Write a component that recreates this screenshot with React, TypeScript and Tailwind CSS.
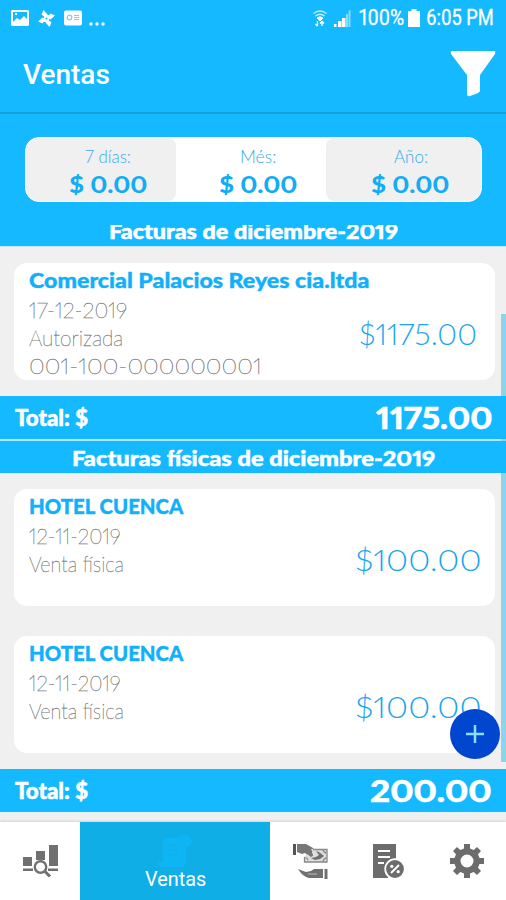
import { useLayoutEffect, useRef, useState } from "react";

type FitProps = { text: string; width: number; className?: string };

// One line of text condensed or widened to an exact width.
function Fit({ text, width, className = "" }: FitProps) {
  const ref = useRef<HTMLSpanElement>(null);
  const [scale, setScale] = useState(1);
  useLayoutEffect(() => {
    if (ref.current) setScale(width / ref.current.offsetWidth);
  }, [text, width]);
  return (
    <div className={`shrink-0 whitespace-nowrap ${className}`} style={{ width }}>
      <span ref={ref} className="inline-block origin-left" style={{ transform: `scaleX(${scale})` }}>
        {text}
      </span>
    </div>
  );
}

function Summary({ label, labelWidth, shade }: { label: string; labelWidth: number; shade: string }) {
  return (
    <div className={`flex shrink-0 flex-col items-center pl-3.5 pt-[5px] ${shade}`}>
      <Fit text={label} width={labelWidth} className="h-[26px] text-[18px] font-light leading-[26px] text-[#3aa9e8]" />
      <Fit text="$ 0.00" width={79} className="h-[30px] text-[22px] font-black leading-[32px] text-[#12adf3]" />
    </div>
  );
}

type Line = { text: string; width: number };

function InvoiceCard({ title, lines, amount }: { title: Line; lines: Line[]; amount: Line & { pad: string } }) {
  return (
    <div className={`ml-3.5 flex h-[117px] w-[481px] shrink-0 justify-between rounded-[13px] bg-white pl-[15px] pt-px ${amount.pad}`}>
      <div className="w-0">
        <Fit {...title} className="h-8 text-[21px] font-black leading-8 text-[#12b0fa] [-webkit-text-stroke:0.4px_#12b0fa]" />
        {lines.map((l) => (
          <Fit key={l.text} {...l} className="h-7 text-[21.500px] font-thin leading-7 text-[#777] [-webkit-text-stroke:0.35px_#777]" />
        ))}
      </div>
      <Fit text={amount.text} width={amount.width} className="mt-[50px] h-10 text-[29.500px] font-light leading-10 text-[#1ba5ee]" />
    </div>
  );
}

function TotalBar({ amount, width }: { amount: string; width: number }) {
  return (
    <div className="relative z-10 flex h-[43px] shrink-0 items-center justify-between bg-[#14b9ff] pl-[15px] pr-3.5 text-white [-webkit-text-stroke:0.5px_white]">
      <Fit text="Total: $" width={73} className="text-[22px] font-black leading-[43px]" />
      <Fit text={amount} width={width} className="text-[29.500px] font-black leading-[43px]" />
    </div>
  );
}

function StatusBar() {
  return (
    <div className="flex h-9 justify-between pl-[11px] pr-3 text-white">
      <div className="flex items-center gap-[9px]">
        <svg className="h-4 w-[18px]" viewBox="0 0 18 16">
          <path fill="#fff" fillRule="evenodd" d="M1 0h16l1 1v14l-1 1H1l-1-1V1zM2 2v10l4-4 3 2 4-4 3 3V2zM4 3h2v2H4z" />
        </svg>
        <svg className="h-[17px] w-[17px]" viewBox="0 0 17 17" fill="#fff">
          <path d="M8 8 9.500 4.500 5.500 0 3.500 4.500zM9 8l3.500 1.500L17 5.500l-4.500-2zM9 9l-1.500 3.500L11.500 17l2-4.500zM8 9 4.500 7.500 0 11.500l4.500 2z" />
          <path d="M6 5h5v7H6z" />
          <circle cx="8.500" cy="8.500" r="1" fill="#14b9ff" />
        </svg>
        <svg className="h-4 w-[18px]" viewBox="0 0 18 16">
          <rect width="18" height="15" y=".5" rx="2" fill="#fff" />
          <circle cx="5.500" cy="7.500" r="2.300" fill="none" stroke="#79cff5" strokeWidth="1.300" />
          <path d="M10 5.500h5M10 7.500h5M10 9.500h5" stroke="#79cff5" strokeWidth="1.200" />
        </svg>
        <svg className="ml-[-2px] mt-[11px] h-1 w-4" viewBox="0 0 16 4" fill="#fff">
          <circle cx="2" cy="2" r="1.700" />
          <circle cx="8" cy="2" r="1.700" />
          <circle cx="14" cy="2" r="1.700" />
        </svg>
      </div>
      <div className="flex items-center font-[Roboto,sans-serif] text-[21.500px] leading-9">
        <svg className="mr-1.5 h-[17px] w-3.5" viewBox="0 0 14 17" fill="none" stroke="#fff">
          <path d="M.5 3.500Q7-1.500 13.500 3.500M2.500 6Q7 2.500 11.500 6" strokeWidth="1.500" opacity=".75" />
          <path d="M4 8Q7 5.500 10 8L7 11z" fill="#fff" />
          <path d="M4.500 11v5M2.500 14l2 2.300M9 16v-4M7 13.500l2-2 2 2" strokeWidth="1.300" />
        </svg>
        <svg className="mr-2 h-[17px] w-[18px]" viewBox="0 0 18 17" fill="#fff">
          <path d="M1 14h2.500v3H1zM5 11h3.500v6H5zM9 8h3.500v9H9z" />
          <path d="M13 4h2v13h-2zM15.500 1l2-1v17h-2z" opacity=".5" />
        </svg>
        <Fit text="100%" width={45} className="[-webkit-text-stroke:0.3px_white]" />
        <svg className="ml-1 mr-[6px] h-[18px] w-3" viewBox="0 0 12 18" fill="#fff">
          <path d="M3.500 0h5v2H12v16H0V2h3.500z" />
        </svg>
        <Fit text="6:05 PM" width={68} className="[-webkit-text-stroke:0.3px_white]" />
      </div>
    </div>
  );
}

function BottomNav() {
  return (
    <nav className="flex h-[78px] shrink-0 bg-white shadow-[0_-1px_2px_rgba(0,0,0,0.12)]">
      <div className="flex w-20 justify-center pt-[23px]">
        <svg className="h-8 w-[35px]" viewBox="0 0 35 32" fill="#707070">
          <path d="M0 12h9v9H0zM13 6h9v9h-9zM26 0h9v21h-9zM0 23.500h10v2.500H0zM25 23.500h10v2.500H25z" />
          <circle cx="17.500" cy="22" r="5.700" fill="#fff" stroke="#707070" strokeWidth="2.400" />
          <path d="m21.500 26 5.500 5.500" stroke="#707070" strokeWidth="3" />
        </svg>
      </div>
      <div className="flex w-[190px] flex-col items-center bg-[#10aee7] pt-3">
        <svg className="h-[33px] w-[34px]" viewBox="0 0 34 33" fill="#0eb5f4">
          <path d="M7 4h14a7 7 0 0 0 7 10v14q0 5-5 5H5q-5 0-5-5h5V7q0-3 2-3z" />
          <circle cx="27" cy="7" r="6.500" />
          <path d="M10 11h8M10 16h11M10 21h11" stroke="#10aee7" strokeWidth="1.500" />
        </svg>
        <Fit text="Ventas" width={61} className="h-[26px] font-[Roboto,sans-serif] text-[19.500px] leading-[26px] text-white" />
      </div>
      <div className="flex flex-1 items-start pl-[23px] pt-[22px]">
        <svg className="h-9 w-[35px]" viewBox="0 0 35 36">
          <path fill="#555" d="M0 0h3v11H0z" />
          <path fill="#777" d="M4 0h9l7 4 2 3-3 1 2 5-3 1-6-5-3 1-5-2z" />
          <path fill="#ddd" d="M18 5h16v13H11v-5l3-3 4 3 3-2z" />
          <path fill="none" stroke="#888" strokeWidth="1.300" d="M20 5.500h14v12.500H11.500V13M15 16q-1-2-2.500-2.500M33 9q-2-.5-3-3M33 14q-2 .5-3 3" />
          <path fill="#707070" d="m23 7 3 1 5 4-4 3-5 1-4-2 5-1 3-2z" />
          <path fill="#707070" d="m5 25 8 3 5-1 3-2h9v9H16q-6-1-11-9zM31.500 25H34.500v10h-3z" />
          <path d="M15 30h9" stroke="#bbb" />
        </svg>
        <svg className="ml-[45px] h-[34px] w-8" viewBox="0 0 32 34">
          <path fill="#6c6c6c" d="M0 0h23v16l-8 18H0z" />
          <path d="M5 7h12M5 13h12M5 19h6" stroke="#fff" strokeWidth="2" />
          <circle cx="22" cy="25" r="9.800" fill="#6c6c6c" stroke="#fff" strokeWidth="1.800" />
          <path d="m18 29 8-8" stroke="#fff" strokeWidth="2" />
          <circle cx="18.800" cy="22.300" r="1.600" fill="#fff" />
          <circle cx="25.200" cy="27.700" r="1.600" fill="#fff" />
        </svg>
        <svg className="ml-[45px] h-[34px] w-[34px]" viewBox="0 0 34 34">
          <path
            fill="#6c6c6c"
            fillRule="evenodd"
            d="M14 0h6v4.500l3.700 1.500L27 3l4 4-3 3.300 1.500 3.700H34v6h-4.500L28 23.700l3 3.300-4 4-3.300-3-3.700 1.500V34h-6v-4.500L10.300 28 7 31l-4-4 3-3.300L4.500 20H0v-6h4.500L6 10.300 3 7l4-4 3.300 3L14 4.500zM17 10.500a6.500 6.500 0 1 0 0 13 6.500 6.500 0 0 0 0-13z"
          />
        </svg>
      </div>
    </nav>
  );
}

export default function App() {
  return (
    <div className="relative flex h-[900px] w-[506px] flex-col overflow-hidden bg-[#f0f0f0] font-[Lato,sans-serif] proportional-nums">
      <header className="h-[114px] shrink-0 border-b-2 border-[#129fdb] bg-[#14b9ff]">
        <StatusBar />
        <div className="flex justify-between pl-[23px] pr-2.5">
          <Fit text="Ventas" width={87} className="mt-[19px] h-10 font-[Roboto,sans-serif] text-[27px] font-medium leading-10 text-white" />
          <svg className="mt-3.5 h-[47px] w-[46px]" viewBox="0 0 46 47" fill="#fff">
            <path d="M2 1h42q2 0 1 3L30 25v16q0 2-10 5-3 1-3-2V25L1 4q-1-3 1-3z" />
          </svg>
        </div>
      </header>

      <section className="h-[111px] shrink-0 bg-[#14b9ff] pl-[25px] pt-[23px]">
        <div className="flex h-[65px] w-[457px] overflow-hidden rounded-[14px] border border-white bg-white">
          <Summary label="7 días:" labelWidth={46} shade="w-[150px] rounded-r-[8px] bg-[#f0f0f0]" />
          <Summary label="Més:" labelWidth={36} shade="w-[150px] bg-white" />
          <Summary label="Año:" labelWidth={34} shade="w-[155px] rounded-l-[8px] bg-[#f0f0f0]" />
        </div>
      </section>

      <main className="relative flex h-[589px] shrink-0 flex-col overflow-hidden">
        <div className="mb-4 h-[22px] shrink-0 overflow-hidden border-b border-[#c4eafa] bg-[#14b9ff] pl-[109px]">
          <Fit text="Facturas de diciembre-2019" width={289} className="-mt-[9px] text-[21.500px] font-black leading-[31px] text-white [-webkit-text-stroke:0.5px_white]" />
        </div>
        <InvoiceCard
          title={{ text: "Comercial Palacios Reyes cia.ltda", width: 340 }}
          lines={[
            { text: "17-12-2019", width: 98 },
            { text: "Autorizada", width: 94 },
            { text: "001-100-000000001", width: 233 },
          ]}
          amount={{ text: "$1175.00", width: 118, pad: "pr-[18px]" }}
        />
        <div className="h-4 shrink-0" />
        <TotalBar amount="1175.00" width={116} />
        <div className="h-0.5 shrink-0 bg-[#b7e6fa]" />
        <div className="relative z-10 mb-4 h-8 shrink-0 bg-[#14b9ff] pl-[72px]">
          <Fit text="Facturas físicas de diciembre-2019" width={363} className="text-[21.500px] font-black leading-[34px] text-white [-webkit-text-stroke:0.5px_white]" />
        </div>
        {["a", "b"].map((id) => (
          <div key={id} className="h-[147px] shrink-0">
            <InvoiceCard
              title={{ text: "HOTEL CUENCA", width: 154 }}
              lines={[
                { text: "12-11-2019", width: 92 },
                { text: "Venta física", width: 95 },
              ]}
              amount={{ text: "$100.00", width: 127, pad: "pr-[13px]" }}
            />
          </div>
        ))}
        <div className="-mt-3.5 shrink-0">
          <TotalBar amount="200.00" width={122} />
        </div>
        <div className="h-0.5 shrink-0 bg-[#e0f4fb]" />
        <div className="absolute right-0 top-[89px] h-[448px] w-[5px] bg-[#8dd3ea]" />
      </main>

      <div className="h-2 shrink-0" />
      <BottomNav />

      <button aria-label="+" className="absolute left-[450px] top-[709px] z-20 flex size-[50px] items-center justify-center rounded-full bg-[#0046cf]">
        <svg className="size-[18px]" viewBox="0 0 18 18">
          <path d="M9 0v18M0 9h18" stroke="#8edcff" strokeWidth="2.500" />
        </svg>
      </button>
    </div>
  );
}
